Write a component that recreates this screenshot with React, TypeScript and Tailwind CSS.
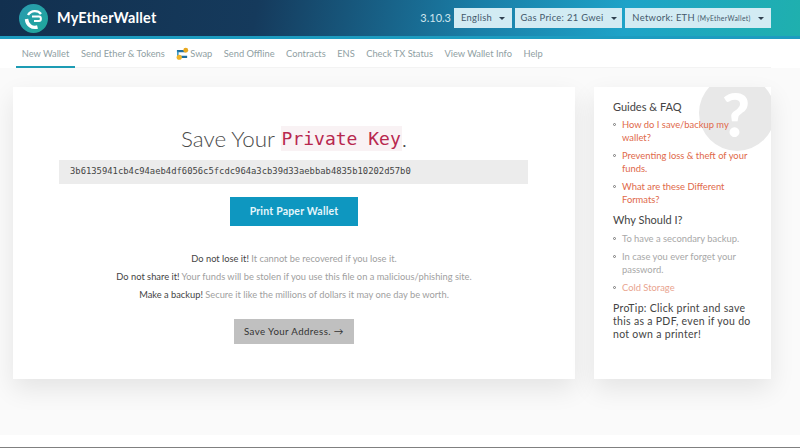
const navItems = ["Send Ether & Tokens"];
const navRest = ["Send Offline", "Contracts", "ENS", "Check TX Status", "View Wallet Info", "Help"];

function Logo() {
  return (
    <svg width="29" height="29" viewBox="0 0 29 29" className="shrink-0">
      <defs>
        <linearGradient id="logo-bg" x1="0" y1="0" x2="1" y2="1">
          <stop offset="0" stopColor="#2a9ab0" />
          <stop offset="1" stopColor="#1fa89a" />
        </linearGradient>
      </defs>
      <circle cx="14.5" cy="14.5" r="14.5" fill="url(#logo-bg)" />
      <path d="M9 11C12 6 19 6 22 10" fill="none" stroke="#fff" strokeWidth="2.4" />
      <path d="M13 12.5H20C22.500 12.500 22.500 17 20 17H15" fill="none" stroke="#fff" strokeWidth="2" />
      <path d="M7.500 15C8 21 13 24.500 18.500 23" fill="none" stroke="#fff" strokeWidth="3.4" />
    </svg>
  );
}

function SwapIcon() {
  return (
    <svg width="13" height="14" viewBox="0 0 14 14" className="mr-[1px] shrink-0">
      <path d="M1 4H10M4 10H12" stroke="#1f6f9f" strokeWidth="2.4" fill="none" />
      <path d="M2 4V10H6" stroke="#2a8fc0" strokeWidth="1.6" fill="none" />
      <circle cx="10.500" cy="3" r="2.600" fill="#e8a820" />
      <circle cx="3.500" cy="10.500" r="2.800" fill="#f0b429" />
    </svg>
  );
}

function Dropdown({ children, className }: { children: React.ReactNode; className: string }) {
  return (
    <button className={`flex h-5 items-center justify-center gap-[7px] whitespace-nowrap bg-[#d2ebf3] text-[9.4px] tracking-[0.3px] text-[#44596b] ${className}`}>
      <span>{children}</span>
      <span className="h-0 w-0 border-x-[3px] border-t-[3px] border-x-transparent border-t-[#2f3f4f]" />
    </button>
  );
}

function Bullet({ children, className }: { children: React.ReactNode; className: string }) {
  return (
    <li className={`relative pl-[9px] text-[9.4px] leading-[13px] ${className}`}>
      <span className="absolute left-0 top-[5px] h-[3px] w-[3px] rounded-full border border-[#777]" />
      {children}
    </li>
  );
}

export default function App() {
  return (
    <div className="flex h-[448px] w-[800px] flex-col overflow-hidden bg-white font-['Lato',sans-serif]">
      <header className="flex h-[36px] shrink-0 items-center justify-between bg-[linear-gradient(100deg,#12304f_0%,#153a5c_32%,#1a7fa8_60%,#1ea3c8_78%,#1fb0ae_100%)] pl-[19px] pr-[29px]">
        <div className="flex items-center gap-[9px]">
          <Logo />
          <span className="text-[14.4px] font-bold tracking-[0.2px] text-white">MyEtherWallet</span>
        </div>
        <div className="flex items-center">
          <span className="mr-[3px] text-[11px] text-[#cfe6ee]">3.10.3</span>
          <Dropdown className="w-[58px]">English</Dropdown>
          <Dropdown className="ml-[3px] w-[107px]">Gas Price: 21 Gwei</Dropdown>
          <Dropdown className="ml-[3px] w-[146px]">
            Network: ETH <span className="text-[6.8px]">(MyEtherWallet)</span>
          </Dropdown>
        </div>
      </header>
      <div className="h-[3px] shrink-0 bg-[#1d9cc0]" />

      <nav className="mx-[16px] flex h-[29px] w-[755px] shrink-0 items-center gap-[11.5px] border-b border-[#f3f3f3] pt-[2px] text-[9.3px] text-[#8fa0a3]">
        <span className="-mb-[1px] -mr-[5.5px] -mt-[2px] flex h-[29px] w-[59px] items-center justify-center border-b-2 border-[#1d9cb4] pt-[2px]">New Wallet</span>
        {navItems.map((item) => (
          <span key={item}>{item}</span>
        ))}
        <span className="flex items-center">
          <SwapIcon />
          Swap
        </span>
        {navRest.map((item) => (
          <span key={item}>{item}</span>
        ))}
      </nav>

      <main className="flex h-[367px] shrink-0 items-start gap-[19px] bg-[#fafafa] pl-[13px] pt-[19px]">
        <section className="flex h-[292px] w-[562px] flex-col items-center bg-white pt-[39px] shadow-[0_10px_24px_rgba(0,0,0,0.09)]">
          <h1 className="flex h-[25px] items-center text-[22.4px] font-light text-[#4a4a4a]">
            Save Your&nbsp;
            <code className="bg-[#f9f2f4] px-[1px] font-['DejaVu_Sans_Mono',monospace] text-[18px] leading-[25px] text-[#b8284f]">Private Key</code>
            .
          </h1>
          <div className="ml-[46px] mt-[9px] flex h-[24px] w-[469px] items-center self-start bg-[#ececec] pl-[11px] font-['DejaVu_Sans_Mono',monospace] text-[8.85px] text-[#444]">
            3b6135941cb4c94aeb4df6056c5fcdc964a3cb39d33aebbab4835b10202d57b0
          </div>
          <button className="mt-[13px] h-[29px] w-[128px] bg-[#0e97c0] text-[10.5px] font-bold tracking-[0.2px] text-[#e6f6fb]">
            Print Paper Wallet
          </button>
          <div className="mt-[26px] flex flex-col items-center gap-[4.5px] text-[9.3px] leading-[13.5px] text-[#a0a0a0]">
            <p><span className="text-[#444]">Do not lose it!</span> It cannot be recovered if you lose it.</p>
            <p><span className="text-[#444]">Do not share it!</span> Your funds will be stolen if you use this file on a malicious/phishing site.</p>
            <p><span className="text-[#444]">Make a backup!</span> Secure it like the millions of dollars it may one day be worth.</p>
          </div>
          <button className="mt-[17px] h-[25px] w-[120px] bg-[#c0c0c0] text-[9.7px] tracking-[0.4px] text-[#333]">
            Save Your Address. →
          </button>
        </section>

        <aside className="relative h-[292px] w-[177px] overflow-hidden bg-white pl-[19px] pr-[17px] pt-[12px] shadow-[0_10px_24px_rgba(0,0,0,0.09)]">
          <div className="absolute left-[105px] top-[-12px] h-[76px] w-[76px] rounded-full bg-[#e8e8e8]" />
          <span className="absolute left-[128px] top-[2px] text-[60px] font-black leading-[50px] text-white">?</span>
          <div className="relative">
            <h3 className="text-[11px] leading-[15px] text-[#444]">Guides &amp; FAQ</h3>
            <ul className="mt-[4px] flex flex-col gap-[5px] text-[#e0694a]">
              <Bullet className="">How do I save/backup my wallet?</Bullet>
              <Bullet className="">Preventing loss &amp; theft of your funds.</Bullet>
              <Bullet className="">What are these Different Formats?</Bullet>
            </ul>
            <h3 className="mt-[6px] text-[11px] leading-[15px] text-[#444]">Why Should I?</h3>
            <ul className="mt-[5px] flex flex-col gap-[5px]">
              <Bullet className="text-[#a8a8a8]">To have a secondary backup.</Bullet>
              <Bullet className="text-[#a8a8a8]">In case you ever forget your password.</Bullet>
              <Bullet className="text-[#e9a48f]">Cold Storage</Bullet>
            </ul>
            <p className="mt-[8px] text-[10.5px] leading-[13px] tracking-[0.3px] text-[#444]">
              ProTip: Click print and save this as a PDF, even if you do not own a printer!
            </p>
          </div>
        </aside>
      </main>

      <div className="flex-1" />
      <div className="h-[1px] shrink-0 bg-[#808080]" />
    </div>
  );
}
